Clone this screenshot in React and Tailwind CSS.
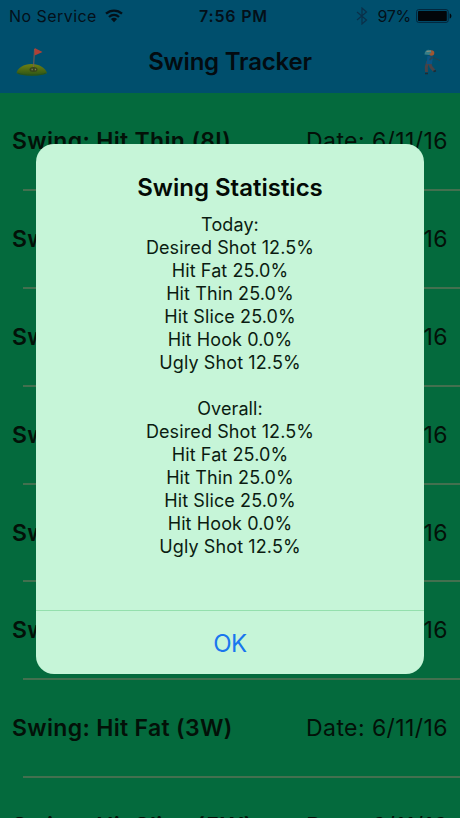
import React from "react";

const swings = [
  "Hit Thin (8I)",
  "Hit Fat (7I)",
  "Hit Slice (9I)",
  "Desired Shot (PW)",
  "Ugly Shot (5I)",
  "Hit Thin (6I)",
  "Hit Fat (3W)",
  "Hit Slice (5W)",
];

const results = [
  "Desired Shot 12.5%",
  "Hit Fat 25.0%",
  "Hit Thin 25.0%",
  "Hit Slice 25.0%",
  "Hit Hook 0.0%",
  "Ugly Shot 12.5%",
];

function StatusBar() {
  return (
    <div className="grid h-[31px] grid-cols-3 items-center px-[9px] text-[16px] leading-none text-[#041019]">
      <div className="flex items-center gap-[8px] whitespace-nowrap">
        <span className="tracking-[0.45px]">No Service</span>
        <svg width="18" height="14" viewBox="0 0 18 14" fill="none" stroke="currentColor">
          <path d="M1 4.7C5.6.5 12.4.5 17 4.7" strokeWidth="2.3" />
          <path d="M4 8c3-2.7 7-2.7 10 0" strokeWidth="2.3" />
          <path d="M5.9 10.1c1.8-1.7 4.4-1.7 6.2 0L9 13.3z" fill="currentColor" stroke="none" />
        </svg>
      </div>
      <span className="pl-[7px] text-center font-semibold tracking-[0.8px]">7:56 PM</span>
      <div className="flex items-center justify-end whitespace-nowrap">
        <svg className="mr-[10px] text-[#0a3049]" width="12" height="18" viewBox="0 0 12 18" fill="none" stroke="currentColor" strokeWidth="1.2">
          <path d="M1 5l9.5 8L6 17V1l4.500 4L1 13" />
        </svg>
        <span className="tracking-[-0.3px]">97%</span>
        <svg className="-mr-[2px] ml-[5px]" width="37" height="14" viewBox="0 0 37 14">
          <rect x=".6" y=".6" width="31.600" height="12.800" rx="2" fill="none" stroke="#03243a" strokeWidth="1" />
          <rect x="2" y="2" width="28.800" height="10" rx=".8" fill="#02060a" />
          <path d="M33.700 4.500c2.300.5 2.300 4.500 0 5z" fill="#02060a" />
        </svg>
      </div>
    </div>
  );
}

function FlagIcon() {
  return (
    <svg width="32" height="30" viewBox="0 0 32 30">
      <defs>
        <linearGradient id="turf" x2="0" y2="1">
          <stop stopColor="#6f8012" />
          <stop offset="1" stopColor="#2b5417" />
        </linearGradient>
      </defs>
      <path d="M.5 26c1-5 7-9 15-9s14 4 15.500 9c-4 3.500-26 3.500-30.500 0z" fill="url(#turf)" />
      <path d="M1.500 26c5 2.800 24 2.800 28.500 0" fill="none" stroke="#24521f" strokeWidth="1" />
      <path d="M18.500 2L17.500 21" stroke="#795f50" strokeWidth="1" />
      <path d="M18.700 1l7.800 4-7.900 3.500z" fill="#b04036" />
      <ellipse cx="17.500" cy="22.500" rx="4" ry="2.500" fill="#37461b" />
      <path d="M15.500 22.500h1.300m2 0h1.300" stroke="#7b7c58" strokeWidth="1.300" />
    </svg>
  );
}

function GolferIcon() {
  return (
    <svg width="18" height="26" viewBox="0 0 18 26" fill="none">
      <path d="M5 12l-1.700 6 .2 5M6 12l2 6 3 3.500" stroke="#4a4347" strokeWidth="3" />
      <path d="M2 24.500h3M10.500 22.500l2.500-.7" stroke="#202b32" strokeWidth="1.500" />
      <path d="M4.500 7l5.500.5L9 15H3.500z" fill="#0b5384" />
      <path d="M9 8l-2.500 3 4-3" stroke="#284554" strokeWidth="1.500" />
      <path d="M10 8.500l7 3" stroke="#293e4b" strokeWidth="1" />
      <ellipse cx="8.500" cy="4" rx="2.800" ry="2.700" fill="#a15631" />
      <path d="M1.500 5.500c0-5.500 6-6 7-2.500L6 6z" fill="#357d87" />
      <path d="M3.500 2.500L8 2" stroke="#8b8f7e" strokeWidth="1" />
    </svg>
  );
}

function SwingRow({ name }) {
  return (
    <div className="flex h-[97.900px] shrink-0 flex-col">
      <div className="flex flex-1 items-center justify-between pr-[12px] pl-[12px] text-[23px] leading-[28px] whitespace-nowrap text-[#031108]">
        <span className="font-semibold tracking-[0.330px]">Swing: {name}</span>
        <span className="tracking-[0.420px]">Date: 6/11/16</span>
      </div>
      <div className="ml-[23px] h-[2px] bg-[#43704f]" />
    </div>
  );
}

function ResultGroup({ title }) {
  return (
    <div>
      <p>{title}</p>
      {results.map((result) => (
        <p key={result}>{result}</p>
      ))}
    </div>
  );
}

export default function App() {
  return (
    <main className="relative flex h-[818px] w-[460px] flex-col overflow-hidden bg-[#046a3d] font-[Inter,'Liberation_Sans',sans-serif]">
      <header className="h-[93px] shrink-0 bg-[#004f6d]">
        <StatusBar />
        <div className="grid h-[61px] grid-cols-[1fr_auto_1fr] items-center pr-[19px] pl-[16px]">
          <FlagIcon />
          <h1 className="mr-[-3px] text-[24px] leading-none font-semibold tracking-[-0.200px] text-[#030b10]">Swing Tracker</h1>
          <div className="justify-self-end">
            <GolferIcon />
          </div>
        </div>
      </header>
      <section className="flex flex-col">
        {swings.map((name) => (
          <SwingRow key={name} name={name} />
        ))}
      </section>

      <div role="dialog" className="absolute top-[144px] left-[36px] flex h-[530px] w-[388px] flex-col overflow-hidden rounded-[18px] bg-[#c6f5d8] text-center text-[#0b1c11]">
        <div className="flex-1 pt-[29px]">
          <h2 className="text-[24px] leading-[30px] font-semibold text-[#030a05]">Swing Statistics</h2>
          <div className="mt-[10px] flex flex-col gap-[23px] text-[18px] leading-[23px] tracking-[0.110px]">
            <ResultGroup title="Today:" />
            <ResultGroup title="Overall:" />
          </div>
        </div>
        <button className="h-[64px] border-t border-[#94dfad] pt-[2px] text-[24px] leading-none tracking-[-0.500px] text-[#1976ee]">OK</button>
      </div>
    </main>
  );
}
